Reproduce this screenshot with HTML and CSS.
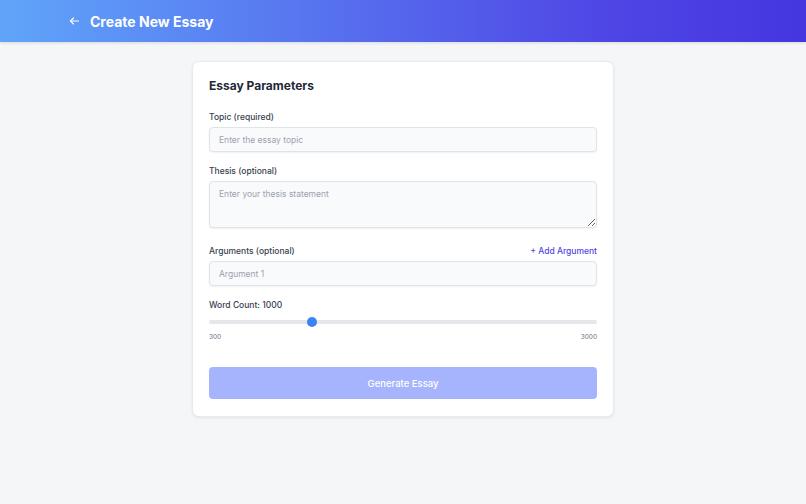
FILE: index.html
```html
<!DOCTYPE html>
<html lang="en">
  <head>
    <meta charset="UTF-8" />
    <meta name="viewport" content="width=device-width, initial-scale=1.0" />
    <title>Create New Essay</title>
    <link rel="stylesheet" href="styles.css">
  </head>
  <body>
    <header class="topbar">
      <div class="topbar-inner">
        <a class="back" href="#" aria-label="Back">
          <svg width="13" height="12" viewBox="0 0 24 24" fill="none" stroke="currentColor" stroke-width="2.2" stroke-linecap="round" stroke-linejoin="round">
            <path d="M20 12H4" />
            <path d="M10 6l-6 6 6 6" />
          </svg>
        </a>
        <h1>Create New Essay</h1>
      </div>
    </header>

    <main class="page">
      <form class="card">
        <h2>Essay Parameters</h2>

        <div class="field">
          <label for="topic">Topic (required)</label>
          <input id="topic" type="text" placeholder="Enter the essay topic" />
        </div>

        <div class="field field-tall">
          <label for="thesis">Thesis (optional)</label>
          <textarea id="thesis" placeholder="Enter your thesis statement"></textarea>
        </div>

        <div class="field">
          <div class="field-head">
            <label for="arg1">Arguments (optional)</label>
            <a class="add-link" href="#">+ Add Argument</a>
          </div>
          <input id="arg1" type="text" placeholder="Argument 1" />
        </div>

        <div class="field">
          <label for="words">Word Count: 1000</label>
          <div class="range">
            <div class="range-track"></div>
            <div class="range-thumb"></div>
          </div>
          <div class="range-labels">
            <span>300</span>
            <span>3000</span>
          </div>
        </div>

        <button class="submit" type="button" disabled>Generate Essay</button>
      </form>
    </main>
  </body>
</html>
```

FILE: styles.css
```css
* {
  margin: 0;
  padding: 0;
  box-sizing: border-box;
}

body {
  font-family: "Inter", "Noto Sans", sans-serif;
  background: #f5f6f8;
  color: #1f2937;
  min-height: 100vh;
}

.topbar {
  height: 42px;
  background: linear-gradient(to right, #60a5fa, #4f46e5 75%, #4536e0);
  box-shadow: 0 1px 3px rgba(0, 0, 0, 0.12);
}

.topbar-inner {
  max-width: 670px;
  margin: 0 auto;
  height: 100%;
  display: flex;
  align-items: center;
  gap: 9px;
}

.back {
  color: #fff;
  display: flex;
  align-items: center;
  width: 13px;
  height: 12px;
}

.topbar h1 {
  color: #fff;
  font-size: 14px;
  font-weight: 700;
}

.page {
  padding: 19px 0 40px;
}

.card {
  width: 422px;
  margin: 0 auto;
  background: #fff;
  border: 1px solid #e9eaee;
  border-radius: 7px;
  box-shadow: 0 1px 3px rgba(0, 0, 0, 0.08);
  padding: 16px 16px 17px;
}

.card h2 {
  font-size: 12px;
  line-height: 16px;
  font-weight: 700;
  color: #1f2937;
  margin-bottom: 17px;
}

.field {
  margin-bottom: 13px;
}

.field-tall {
  margin-bottom: 17px;
}

.field label {
  display: block;
  font-size: 8.5px;
  line-height: 12px;
  font-weight: 500;
  color: #374151;
  margin-bottom: 4px;
}

.field-head {
  display: flex;
  justify-content: space-between;
  align-items: baseline;
}

.add-link {
  font-size: 8.5px;
  line-height: 12px;
  font-weight: 500;
  color: #4f46e5;
  text-decoration: none;
}

.field input,
.field textarea {
  display: block;
  width: 100%;
  font-family: inherit;
  font-size: 8.5px;
  color: #374151;
  background: #f9fafb;
  border: 1px solid #e0e3e8;
  border-radius: 4px;
  box-shadow: 0 1px 2px rgba(0, 0, 0, 0.06);
  padding: 0 9px;
  outline: none;
}

.field input {
  height: 25px;
}

.field textarea {
  height: 47px;
  padding-top: 7px;
  resize: vertical;
}

.field input::placeholder,
.field textarea::placeholder {
  color: #9ca3af;
}

.range {
  position: relative;
  height: 12px;
  margin-top: 5px;
  display: flex;
  align-items: center;
}

.range-track {
  width: 100%;
  height: 4px;
  border-radius: 2px;
  background: #e5e7eb;
}

.range-thumb {
  position: absolute;
  left: 98px;
  top: 1px;
  width: 10px;
  height: 10px;
  border-radius: 50%;
  background: #3b82f6;
}

.range-labels {
  display: flex;
  justify-content: space-between;
  font-size: 6.5px;
  line-height: 10px;
  color: #6b7280;
  margin-top: 4px;
}

.submit {
  display: block;
  width: 100%;
  height: 32px;
  margin-top: 25px;
  border: none;
  border-radius: 4px;
  background: #a5b4fc;
  color: #fff;
  font-family: inherit;
  font-size: 9.5px;
  font-weight: 500;
}
```
